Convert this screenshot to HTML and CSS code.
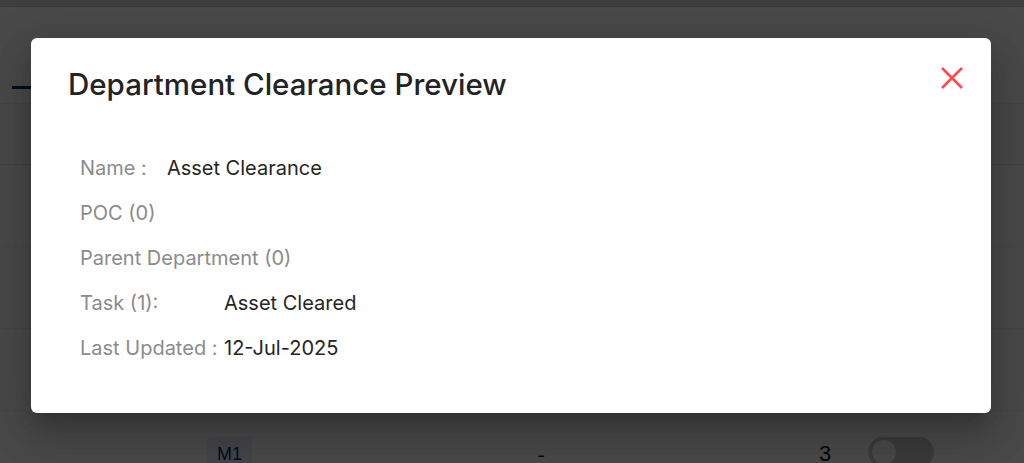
FILE: index.html
```html
<!DOCTYPE html>
<html lang="en">
<head>
<meta charset="utf-8">
<title>Department Clearance Preview</title>
<link rel="stylesheet" href="styles.css">
</head>
<body>
<div class="page">
  <div class="topstrip"></div>
  <div class="tabs">
    <div class="tab active"></div>
  </div>
  <div class="toolbar"></div>
  <div class="table">
    <div class="row"></div>
    <div class="row"></div>
    <div class="row"></div>
    <div class="row data">
      <div class="cell code"><span class="badge">M1</span></div>
      <div class="cell parent">-</div>
      <div class="cell count">3</div>
      <div class="cell status"><span class="toggle"><span class="knob"></span></span></div>
    </div>
  </div>
</div>

<div class="overlay"></div>

<div class="modal" role="dialog">
  <h2 class="modal-title">Department Clearance Preview</h2>
  <button class="close" aria-label="Close">
    <svg viewBox="0 0 24 24" width="24" height="24"><path d="M2 2 L22 22 M22 2 L2 22" stroke="#ff4a4f" stroke-width="2.6" fill="none" stroke-linecap="butt"/></svg>
  </button>
  <div class="details">
    <div class="line inline"><span class="label">Name :</span><span class="value">Asset Clearance</span></div>
    <div class="line"><span class="label">POC (0)</span></div>
    <div class="line"><span class="label">Parent Department (0)</span></div>
    <div class="line grid"><span class="label">Task (1):</span><span class="value">Asset Cleared</span></div>
    <div class="line grid"><span class="label">Last Updated :</span><span class="value">12-Jul-2025</span></div>
  </div>
</div>
</body>
</html>
```

FILE: styles.css
```css
* { box-sizing: border-box; }
html, body { margin: 0; padding: 0; }
body {
  width: 1024px;
  height: 463px;
  overflow: hidden;
  font-family: Inter, "Noto Sans", "Liberation Sans", sans-serif;
  background: #f2f2f2;
  position: relative;
}

.page { width: 1024px; }
.topstrip { height: 7px; background: #cfcfcf; border-bottom: 1px solid #c4c4c4; }
.tabs {
  height: 97px;
  background: #f3f3f3;
  border-bottom: 1px solid #e6e6e6;
  display: flex;
  align-items: flex-end;
  padding: 0 0 14px 12px;
}
.tab.active { width: 120px; height: 3px; background: #0c2d6b; }
.toolbar { height: 61px; background: #f1f1f1; border-bottom: 1px solid #dcdcdc; }
.row { height: 82px; border-bottom: 1px solid #e9e9e9; background: #f4f4f4; }
.row.data { display: flex; align-items: flex-start; padding: 26px 0 0 207px; }
.cell { display: flex; align-items: center; }
.code { width: 330px; }
.badge {
  background: #e0e8f4;
  color: #0b2a66;
  font-family: "Liberation Sans", Arial, sans-serif;
  font-size: 18px;
  line-height: 22px;
  border-radius: 5px;
  padding: 6px 10px;
}
.parent { width: 282px; font-size: 18px; color: #111; padding-top: 8px; }
.count { font-size: 22px; line-height: 26px; color: #111; font-family: "Liberation Sans", Arial, sans-serif; padding-top: 4px; }
.status { margin-left: 37px; }
.toggle {
  width: 66px; height: 30px; border-radius: 15px; background: #c3c3c3;
  display: flex; align-items: center; padding-left: 4px;
}
.knob { width: 24px; height: 24px; border-radius: 50%; background: #f2f2f2; }

.overlay {
  position: absolute; inset: 0;
  background: rgba(0, 0, 0, 0.7);
}

.modal {
  position: absolute;
  left: 31px; top: 38px;
  width: 960px; height: 375px;
  background: #fff;
  border-radius: 6px;
  box-shadow: 0 11px 15px -7px rgba(0,0,0,0.2), 0 24px 38px 3px rgba(0,0,0,0.14), 0 9px 46px 8px rgba(0,0,0,0.12);
  padding: 28px 37px 0 37px;
}
.modal-title {
  margin: 0;
  font-size: 29.5px;
  line-height: 36px;
  font-weight: 500;
  color: #232323;
}
.close {
  position: absolute;
  top: 28px; right: 27px;
  width: 24px; height: 24px;
  padding: 0; border: 0; background: none;
  display: flex;
}
.details {
  margin-top: 54px;
  padding-left: 12px;
  display: flex;
  flex-direction: column;
  gap: 21px;
}
.line { font-size: 20px; line-height: 24px; display: flex; }
.line.inline { gap: 20px; }
.line.grid { display: grid; grid-template-columns: 144px auto; }
.label { color: #8b8b8b; }
.value { color: #252525; }
```
